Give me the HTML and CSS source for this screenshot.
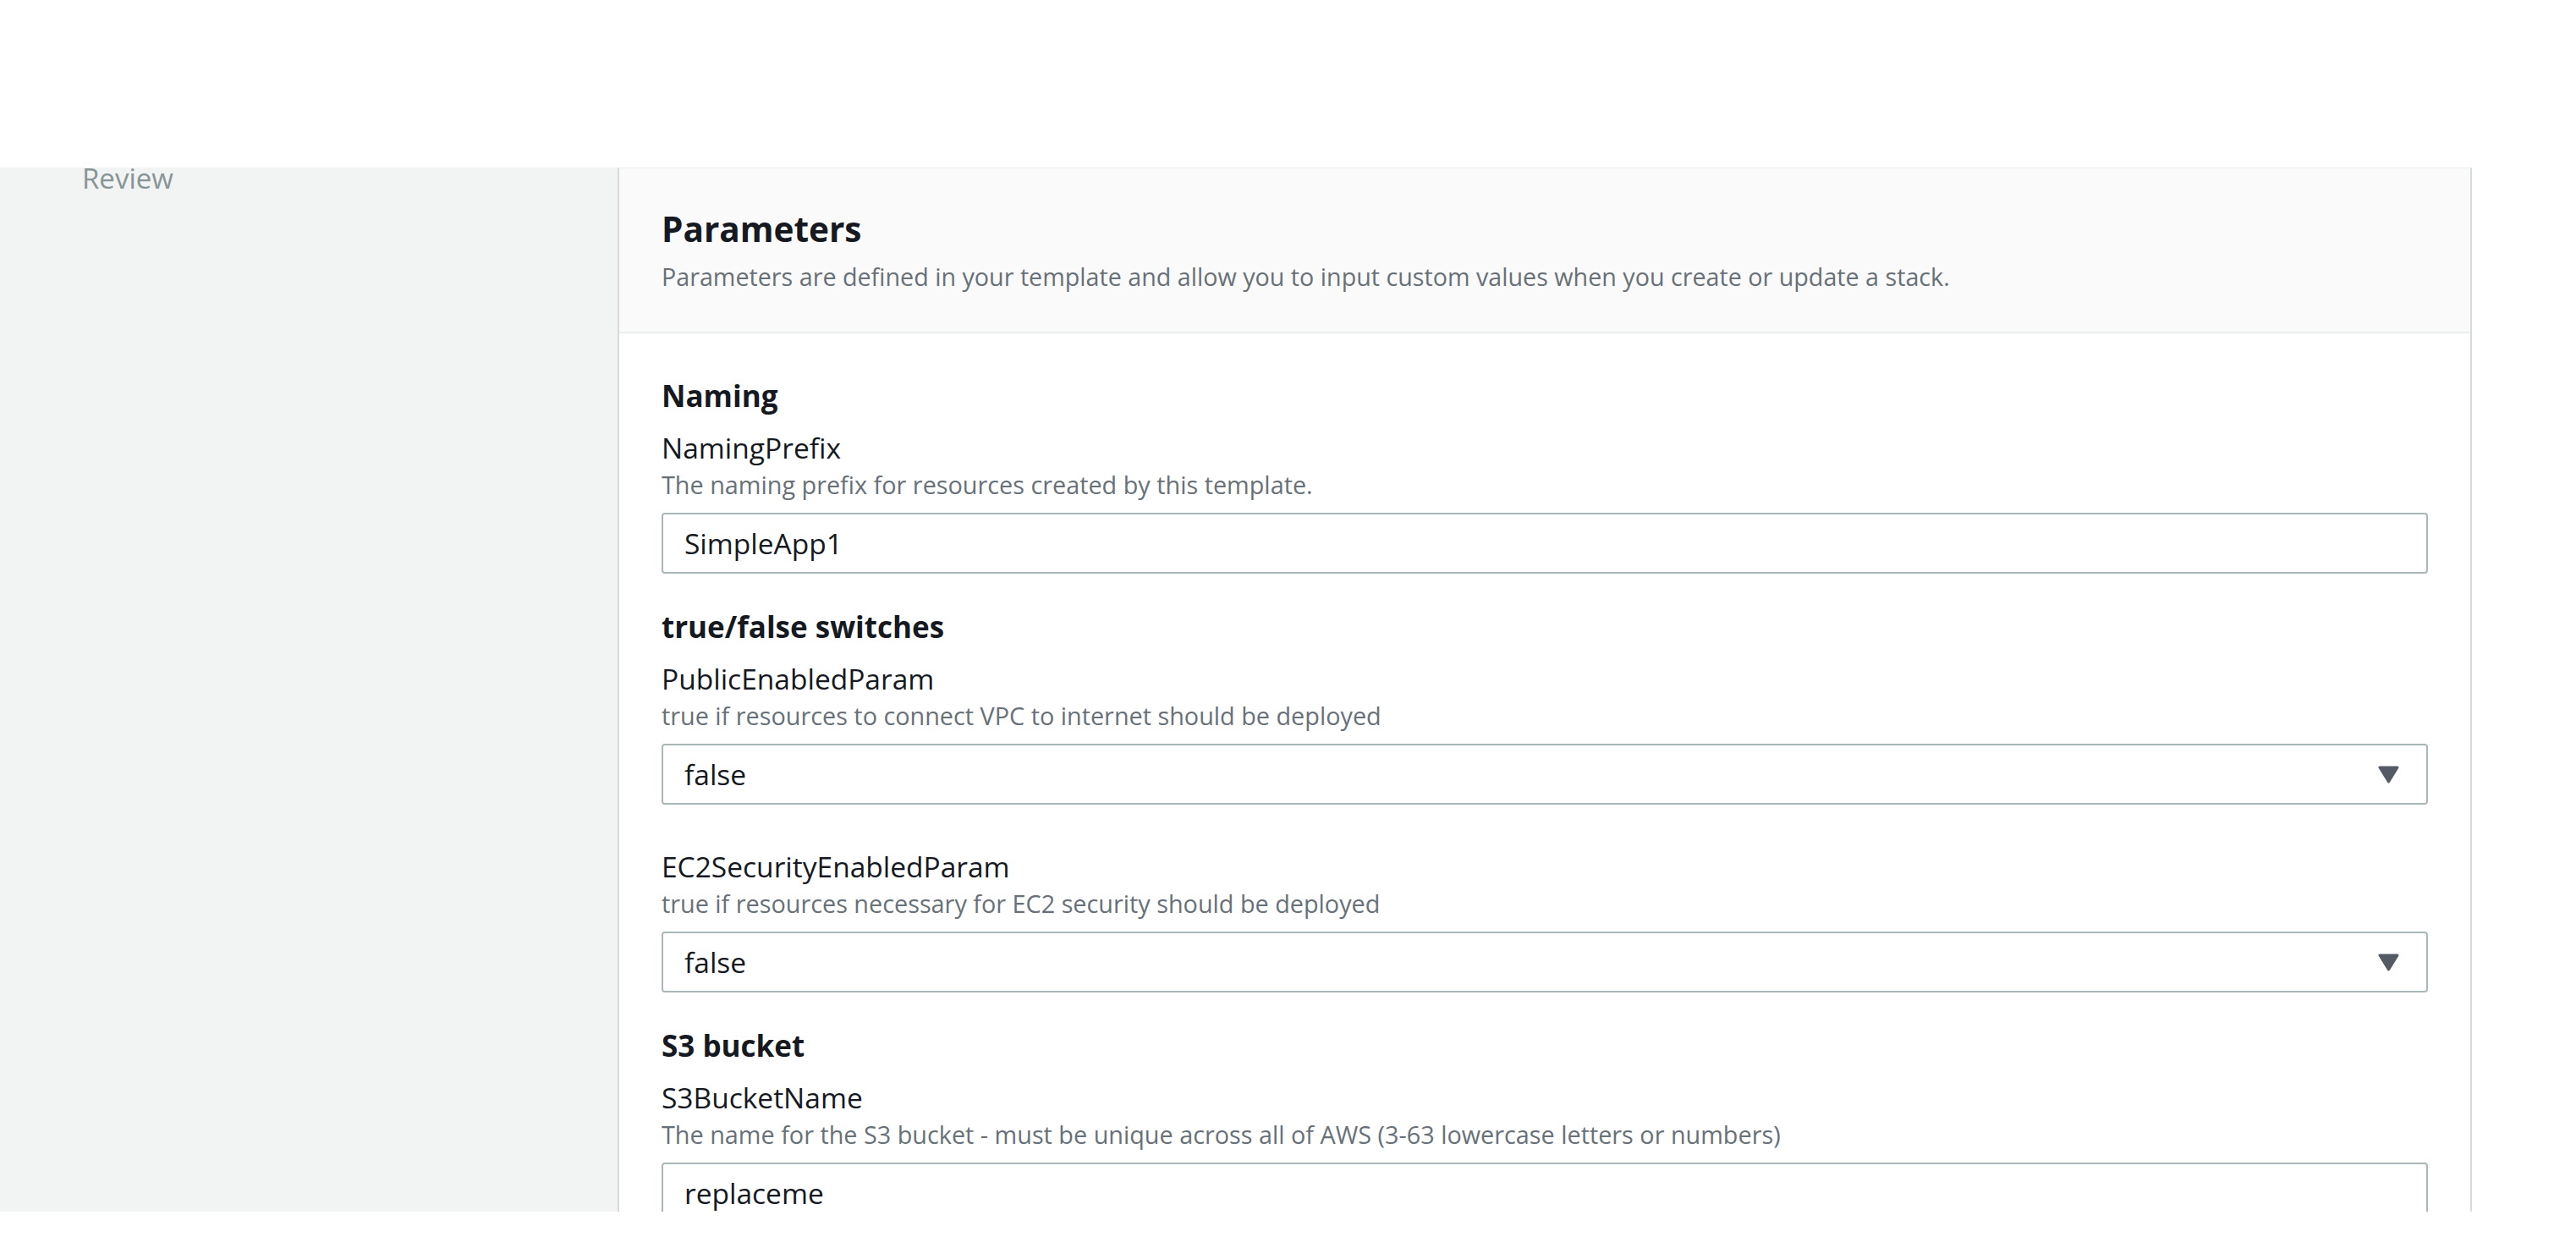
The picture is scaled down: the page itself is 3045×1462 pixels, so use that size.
FILE: index.html
```html
<!DOCTYPE html>
<html lang="en">
<head>
<meta charset="utf-8">
<title>Specify stack details - Parameters</title>
<link rel="stylesheet" href="styles.css">
</head>
<body>
<div class="top"></div>
<div class="frame">
  <aside class="sidebar">
    <div class="nav-item">Review</div>
  </aside>
  <section class="panel">
    <header class="panel-header">
      <h2 class="panel-title">Parameters</h2>
      <p class="panel-desc">Parameters are defined in your template and allow you to input custom values when you create or update a stack.</p>
    </header>
    <div class="panel-body">
      <div class="group">
        <h3 class="group-title">Naming</h3>
        <div class="field">
          <div class="label">NamingPrefix</div>
          <div class="desc">The naming prefix for resources created by this template.</div>
          <div class="control">SimpleApp1</div>
        </div>
      </div>
      <div class="group">
        <h3 class="group-title">true/false switches</h3>
        <div class="field">
          <div class="label">PublicEnabledParam</div>
          <div class="desc">true if resources to connect VPC to internet should be deployed</div>
          <div class="control"><span>false</span><svg class="caret" viewBox="0 0 25 21"><polygon points="2,2 23,2 12.5,19" fill="#545b64" stroke="#545b64" stroke-width="3" stroke-linejoin="round"/></svg></div>
        </div>
        <div class="field">
          <div class="label">EC2SecurityEnabledParam</div>
          <div class="desc">true if resources necessary for EC2 security should be deployed</div>
          <div class="control"><span>false</span><svg class="caret" viewBox="0 0 25 21"><polygon points="2,2 23,2 12.5,19" fill="#545b64" stroke="#545b64" stroke-width="3" stroke-linejoin="round"/></svg></div>
        </div>
      </div>
      <div class="group">
        <h3 class="group-title">S3 bucket</h3>
        <div class="field">
          <div class="label">S3BucketName</div>
          <div class="desc">The name for the S3 bucket - must be unique across all of AWS (3-63 lowercase letters or numbers)</div>
          <div class="control">replaceme</div>
        </div>
      </div>
    </div>
  </section>
</div>
</body>
</html>
```
FILE: styles.css
```css
* {
  box-sizing: border-box;
  margin: 0;
  padding: 0;
}

body {
  background: #ffffff;
  font-family: "Open Sans", "Noto Sans", sans-serif;
  color: #16191f;
}

.top {
  height: 198px;
}

.frame {
  display: flex;
  height: 1234px;
}

.sidebar {
  width: 730px;
  flex: none;
  background: #f2f3f3;
  padding: 1px 0 0 97px;
}

.nav-item {
  font-size: 33px;
  line-height: 24px;
  color: #879596;
}

.panel {
  width: 2192px;
  flex: none;
  overflow: hidden;
  background: #ffffff;
  border-left: 2px solid #d5dbdb;
  border-right: 2px solid #d5dbdb;
  border-top: 1px solid #eaeded;
}

.panel-header {
  height: 195px;
  background: #fafafa;
  border-bottom: 2px solid #eaeded;
  padding: 47px 50px 0;
}

.panel-title {
  font-size: 40.5px;
  font-weight: 700;
  line-height: 50px;
}

.panel-desc {
  margin-top: 11px;
  font-size: 28.7px;
  line-height: 40px;
  color: #687078;
}

.panel-body {
  padding: 52px 50px 0;
}

.group + .group {
  margin-top: 41px;
}

.group-title {
  font-size: 35px;
  font-weight: 700;
  line-height: 44px;
  margin-bottom: 19px;
}

.field + .field {
  margin-top: 53px;
}

.label {
  font-size: 33.5px;
  line-height: 40px;
}

.desc {
  margin-top: 6px;
  font-size: 28.8px;
  line-height: 36px;
  color: #687078;
}

.control {
  margin-top: 15px;
  height: 72px;
  border: 2px solid #aab7b8;
  border-radius: 4px;
  padding: 0 32px 0 25px;
  display: flex;
  align-items: center;
  justify-content: space-between;
  font-size: 33.5px;
  line-height: 40px;
  background: #ffffff;
}

.caret {
  width: 25px;
  height: 21px;
  display: block;
}
```
